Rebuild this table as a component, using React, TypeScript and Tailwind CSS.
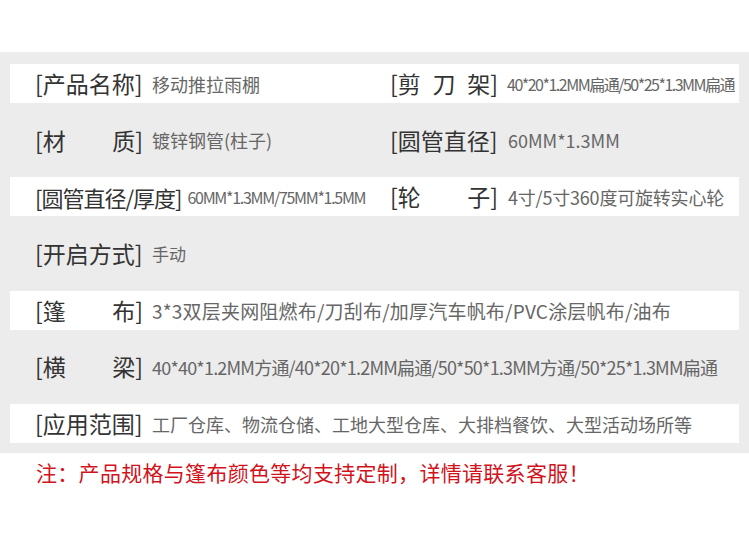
import React from "react";

const F = "font-['Noto_Sans_CJK_SC','Noto_Sans',sans-serif]";

function Label({ parts }: { parts: string[] }) {
  return (
    <div className="flex justify-between items-center text-[23px] leading-none text-[#333] shrink-0 w-[108px]">
      {parts.map((p, i) => (
        <span key={i}>{p}</span>
      ))}
    </div>
  );
}

function Cell({ parts, value, valueClass }: { parts: string[]; value: string; valueClass?: string }) {
  return (
    <div className="flex items-center h-full whitespace-nowrap">
      <Label parts={parts} />
      <span className={`leading-none text-[#666] ${valueClass ?? "ml-[9px] text-[18px]"}`}>{value}</span>
    </div>
  );
}

function Row({ white, children }: { white?: boolean; children: React.ReactNode }) {
  return (
    <div className={`h-[39px] pl-[25px] flex items-center ${white ? "bg-white" : ""}`}>{children}</div>
  );
}

export default function App() {
  return (
    <div className={`w-[749px] h-[536px] bg-white ${F}`}>
      <div className="h-[52px]" />
      <div className="bg-[#ececec] px-[10px] pt-[12px] pb-[10px] flex flex-col gap-[17.7px]">
        <Row white>
          <div className="w-[355px] h-full">
            <Cell parts={["[产品名称]"]} value="移动推拉雨棚" />
          </div>
          <Cell
            parts={["[剪", "刀", "架]"]}
            value="40*20*1.2MM扁通/50*25*1.3MM扁通"
            valueClass="ml-[9px] text-[16px] tracking-[-1.5px]"
          />
        </Row>
        <Row>
          <div className="w-[355px] h-full">
            <Cell parts={["[材", "质]"]} value="镀锌钢管(柱子)" valueClass="ml-[9px] text-[18px]" />
          </div>
          <Cell parts={["[圆管直径]"]} value="60MM*1.3MM" valueClass="ml-[10px] text-[18px]" />
        </Row>
        <Row white>
          <div className="w-[355px] h-full">
            <div className="flex items-center h-full whitespace-nowrap">
              <div className="text-[22px] leading-none text-[#333] tracking-[-1px]">[圆管直径/厚度]</div>
              <span className="ml-[6px] leading-none text-[#666] text-[16px] tracking-[-1.3px]">
                60MM*1.3MM/75MM*1.5MM
              </span>
            </div>
          </div>
          <Cell
            parts={["[轮", "子]"]}
            value="4寸/5寸360度可旋转实心轮"
            valueClass="ml-[10px] text-[18px] tracking-[-0.2px]"
          />
        </Row>
        <Row>
          <Cell parts={["[开启方式]"]} value="手动" valueClass="ml-[9px] text-[17px]" />
        </Row>
        <Row white>
          <Cell
            parts={["[篷", "布]"]}
            value="3*3双层夹网阻燃布/刀刮布/加厚汽车帆布/PVC涂层帆布/油布"
            valueClass="ml-[9px] text-[19px] tracking-[0.2px]"
          />
        </Row>
        <Row>
          <Cell
            parts={["[横", "梁]"]}
            value="40*40*1.2MM方通/40*20*1.2MM扁通/50*50*1.3MM方通/50*25*1.3MM扁通"
            valueClass="ml-[9px] text-[18px] tracking-[-0.8px]"
          />
        </Row>
        <Row white>
          <Cell parts={["[应用范围]"]} value="工厂仓库、物流仓储、工地大型仓库、大排档餐饮、大型活动场所等" />
        </Row>
      </div>
      <div className="pl-[36px] pt-[9px] text-[21px] tracking-[0.3px] leading-none text-[#d0131c]">
        注：产品规格与篷布颜色等均支持定制，详情请联系客服！
      </div>
    </div>
  );
}
